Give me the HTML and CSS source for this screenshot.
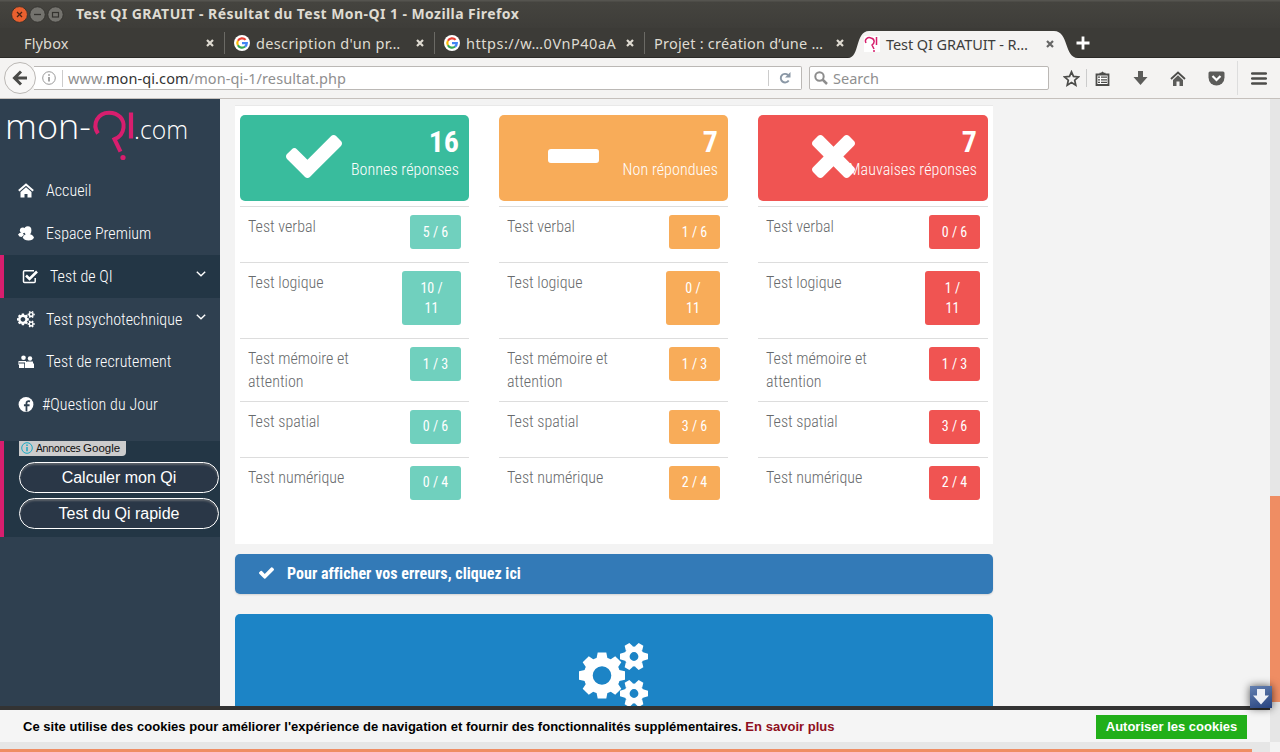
FILE: index.html
```html
<!DOCTYPE html>
<html lang="fr">
<head>
<meta charset="utf-8">
<title>Test QI GRATUIT - Résultat du Test Mon-QI 1</title>
<link rel="stylesheet" href="styles.css">
</head>
<body>
<svg class="defs" aria-hidden="true">
  <symbol id="check" viewBox="121 334 1550 1188"><path d="M1671 566q0 40-28 68l-724 724-136 136q-28 28-68 28t-68-28l-136-136-362-362q-28-28-28-68t28-68l136-136q28-28 68-28t68 28l294 295 656-657q28-28 68-28t68 28l136 136q28 28 28 68z"/></symbol>
  <symbol id="times" viewBox="302 366 1188 1188"><path d="M1490 1322q0 40-28 68l-136 136q-28 28-68 28t-68-28l-294-294-294 294q-28 28-68 28t-68-28l-136-136q-28-28-28-68t28-68l294-294-294-294q-28-28-28-68t28-68l136-136q28-28 68-28t68 28l294 294 294-294q28-28 68-28t68 28l136 136q28 28 28 68t-28 68l-294 294 294 294q28 28 28 68z"/></symbol>
  <symbol id="cogs" viewBox="0 0 70 66">
    <g fill="none" stroke="#fff">
      <g transform="translate(23 32.500)"><circle r="13.800" stroke-width="9"/><path id="bt" fill="#fff" stroke="none" d="M-4.300-23h8.600l1.400 7h-11.400zM-4.300 23h8.600l1.400-7h-11.400zM-23-4.300v8.600l7 1.400v-11.400zM23-4.300v8.600l-7 1.400v-11.400z"/><use href="#bt" transform="rotate(45)"/></g>
      <g id="sg" transform="translate(55 13.500)"><circle r="7.200" stroke-width="5.600"/><path id="st" fill="#fff" stroke="none" d="M-14-2.700v5.400l5 1.500v-8.400zM14-2.700v5.400l-5 1.500v-8.400z"/><use href="#st" transform="rotate(60)"/><use href="#st" transform="rotate(120)"/></g>
      <use href="#sg" y="37"/>
    </g>
  </symbol>
  <symbol id="google" viewBox="0 0 16 16"><circle cx="8" cy="8" r="8" fill="#fff"/><g fill="none" stroke-width="2.2"><path stroke="#ea4335" d="M11.6 4.900A4.700 4.700 0 0 0 3.900 5.800"/><path stroke="#fbbc05" d="M3.900 5.700a4.700 4.700 0 0 0 0 4.600"/><path stroke="#34a853" d="M3.900 10.200a4.700 4.700 0 0 0 7.200 1.300"/><path stroke="#4285f4" d="M8 8.100h4.800a4.700 4.700 0 0 1-1.700 3.500"/></g></symbol>
  <symbol id="close" viewBox="0 0 8 8"><path d="M1 1l6 6M7 1L1 7" stroke="currentColor" stroke-width="2.2"/></symbol>
  <symbol id="chev" viewBox="0 0 10 6"><path d="M.8.8L5 4.800 9.200.8" fill="none" stroke="#fff" stroke-width="1.400"/></symbol>
</svg>

<header class="titlebar">
  <svg width="54" height="18" viewBox="0 0 54 18">
    <circle cx="8.500" cy="8.500" r="7.900" fill="#e9602f" stroke="#2f2e2a" stroke-width=".8"/><path d="M6 6l5 5m0-5l-5 5" stroke="#4b2414" stroke-width="1.300"/>
    <circle cx="26.500" cy="8.500" r="7.700" fill="#74736e" stroke="#302f2b" stroke-width=".8"/><path d="M23 8.500h7" stroke="#34332f" stroke-width="1.300"/>
    <circle cx="44.500" cy="8.500" r="7.700" fill="#74736e" stroke="#302f2b" stroke-width=".8"/><rect x="41.500" y="6.500" width="6" height="4.500" fill="none" stroke="#34332f" stroke-width="1.200"/>
  </svg>
  <span class="wtitle">Test QI GRATUIT - Résultat du Test Mon-QI 1 - Mozilla Firefox</span>
</header>

<nav class="tabs">
  <div class="tab first"><span class="tt">Flybox</span><svg class="x"><use href="#close"/></svg></div>
  <div class="tab"><svg class="fav"><use href="#google"/></svg><span class="tt t2">description d'un pr…</span><svg class="x"><use href="#close"/></svg></div>
  <div class="tab"><svg class="fav"><use href="#google"/></svg><span class="tt t3">https://w…0VnP40aA</span><svg class="x"><use href="#close"/></svg></div>
  <div class="tab"><span class="tt t4">Projet : création d’une …</span><svg class="x"><use href="#close"/></svg></div>
  <div class="active">
    <svg class="shape" viewBox="0 0 230 28"><path fill="#f4f3f2" d="M0 28C12 28 7 1 21 1H206C221 1 216 28 230 28z"/></svg>
    <svg class="fav" viewBox="0 0 16 16"><path fill="#fff" d="M0 0h16v16H0z"/><path d="M2 7C0 3 4 .8 7 2c4 1 4 5 1 7l2 4M10 14v2M12.500 1v8" fill="none" stroke="#d6206d" stroke-width="1.500"/></svg>
    <span class="tt t5">Test QI GRATUIT - R…</span><svg class="x"><use href="#close"/></svg>
  </div>
  <svg class="plus" viewBox="0 0 14 14"><path d="M7 .5v13M.5 7h13" stroke="#fff" stroke-width="2.800"/></svg>
</nav>

<div class="toolbar">
  <div class="back"><svg width="16" height="16" viewBox="0 0 16 16"><path d="M9 1.500L2.500 8 9 14.500M3 8h12" fill="none" stroke="#4a4a48" stroke-width="3"/></svg></div>
  <div class="url">
    <svg width="14" height="14" viewBox="0 0 14 14"><circle cx="7" cy="7" r="6.300" fill="none" stroke="#999"/><path d="M7 6v4.500M7 3.200v1.600" stroke="#888" stroke-width="1.500"/></svg>
    <span class="addr">www.<b>mon-qi.com</b>/mon-qi-1/resultat.php</span>
    <span class="reload"><svg width="12" height="12" viewBox="0 0 12 12"><path d="M9.700 8.500A4.300 4.300 0 1 1 9 3" fill="none" stroke="#8a97a5" stroke-width="1.900"/><path d="M11.500 0v5.500H6z" fill="#8a97a5"/></svg></span>
  </div>
  <div class="search"><svg width="14" height="14" viewBox="0 0 14 14"><circle cx="5.500" cy="5.500" r="4.200" fill="none" stroke="#8d8d8d" stroke-width="2"/><path d="M8.500 8.500L13 13" stroke="#8d8d8d" stroke-width="2.500"/></svg><span>Search</span></div>
  <div class="tools">
    <svg class="star" width="17" height="17" viewBox="0 0 17 17"><path d="M8.500 1.800l2 4.600 5 .5-3.800 3.300 1.100 5-4.300-2.600-4.300 2.600 1.100-5L1.500 6.900l5-.5z" fill="none" stroke="#4c4c4a" stroke-width="1.700"/></svg>
    <i class="sep"></i>
    <svg class="list" width="15" height="15" viewBox="0 0 15 15"><path d="M1.500 3.500h12V14h-12z" fill="#fff" stroke="#4c4c4a" stroke-width="1.800"/><path d="M4.500 4V1.800h1.500L7.500.5 9 1.800h1.500V4z" fill="#4c4c4a"/><path d="M3 6.200h2M6 6.200h6M3 8.800h2M6 8.800h6M3 11.400h2M6 11.400h6" stroke="#4c4c4a" stroke-width="1.200"/></svg>
    <svg class="dl" width="15" height="14" viewBox="0 0 15 14"><path d="M5 0h5v6h4.500L7.500 14 .5 6H5z" fill="#5c5c5a"/></svg>
    <svg class="home" width="16" height="15" viewBox="0 0 16 15"><path d="M1 8l7-6.500L15 8" fill="none" stroke="#4c4c4a" stroke-width="1.800"/><path d="M3 9l5-4.700L13 9v6H9.500v-4.500h-3V15H3z" fill="#5c5c5a"/></svg>
    <svg class="pocket" width="17" height="15" viewBox="0 0 17 15"><path d="M2 .5h13q1.500 0 1.500 1.500v4.500a8 8 0 0 1-16 0V2Q.5.500 2 .5z" fill="#5c5c5a"/><path d="M4.500 5l4 4 4-4" fill="none" stroke="#fff" stroke-width="2.200"/></svg>
    <i class="sep tall"></i>
    <svg class="burger" width="16" height="13" viewBox="0 0 16 13"><path d="M1.200 1.500h13.600M1.200 6.500h13.600M1.200 11.500h13.600" stroke="#4c4c4a" stroke-width="2.500" stroke-linecap="round"/></svg>
  </div>
</div>

<div class="view">
  <aside class="side">
    <svg class="logo" width="220" height="70" viewBox="0 0 220 70">
      <g fill="#fff"><text x="5" y="39.500" class="lg1" textLength="86" lengthAdjust="spacingAndGlyphs">mon-</text><text x="134" y="39.500" class="lg2" textLength="54" lengthAdjust="spacingAndGlyphs">.com</text></g>
      <g fill="none" stroke="#d81e6e"><path stroke-width="4" d="M98 34.500C91.500 25 98 13.700 109 13.700c10 0 15.500 7 14.500 15-.7 5.500-4 9.500-9 11.500l6 12.500"/><path stroke-width="4.200" d="M131 13.500V39.500"/></g>
      <circle cx="123" cy="58.500" r="2.600" fill="#d81e6e"/>
    </svg>
    <ul class="menu">
      <li><svg class="mi" viewBox="0 0 16 15"><path d="M.8 7.800L8 1.500l7.200 6.300" fill="none" stroke="#fff" stroke-width="2"/><path fill="#fff" d="M2.500 9L8 4.300 13.500 9v5.500h-4V11h-3v3.500h-4z"/></svg><span>Accueil</span></li>
      <li><svg class="mi" viewBox="0 0 16 15"><g fill="#fff"><circle cx="4.800" cy="4.300" r="2.900"/><path d="M0 8.500Q1 6.500 4.500 6.500L6 9l-2.500 2Q1 11 0 8.500z"/><ellipse cx="9.800" cy="4.500" rx="3.600" ry="4.200"/><path d="M4.700 11.500Q6 8 10 7.500q5 1 6 4-1 3-5.500 3t-5.800-3z"/></g></svg><span>Espace Premium</span></li>
      <li class="on"><svg class="mi" viewBox="0 0 16 15"><path d="M12 1.800H2.500q-1 0-1 1v9.700q0 1 1 1h9.700q1 0 1-1V9" fill="none" stroke="#fff" stroke-width="1.500"/><path d="M4 6.500l3.500 3.500L15 2.500" fill="none" stroke="#fff" stroke-width="2.600"/></svg><span>Test de QI</span><svg class="chev"><use href="#chev"/></svg></li>
      <li class="psy"><svg class="mi cg"><use href="#cogs"/></svg><span>Test psychotechnique</span><svg class="chev"><use href="#chev"/></svg></li>
      <li><svg class="mi" viewBox="0 0 16 15"><g fill="#fff"><circle cx="5.500" cy="3.700" r="2.300"/><circle cx="12" cy="4.500" r="2.200"/><path d="M1 7h7v1.500H0V8zM9 7.500h6v2h1V14H7V8.500zM0 9.500h6.200V14H1V10.500H0z"/></g></svg><span>Test de recrutement</span></li>
      <li class="fb"><svg class="mi" viewBox="0 0 16 16"><circle cx="8" cy="8" r="7.900" fill="#fff"/><path d="M12.300 4.700c-2.800-.8-3.800.2-3.800 2V15.500M5.800 8.800h6" fill="none" stroke="#2f4050" stroke-width="1.900"/></svg><span>#Question du Jour</span></li>
    </ul>
    <div class="ads">
      <div class="adtag"><svg width="12" height="12" viewBox="0 0 12 12"><circle cx="6" cy="6" r="5.300" fill="none" stroke="#1aa9c4"/><path d="M6 5v4.300M6 2.500v1.500" stroke="#1aa9c4" stroke-width="1.500"/></svg><span class="an">Annonces</span><span class="go">Google</span></div>
      <a class="pill">Calculer mon Qi</a>
      <a class="pill">Test du Qi rapide</a>
    </div>
  </aside>

  <main class="main">
    <section class="card">
      <div class="col green">
        <div class="panel"><svg class="big ck"><use href="#check"/></svg><div class="num">16</div><div class="lab">Bonnes réponses</div></div>
        <div class="row"><span>Test verbal</span><b>5 / 6</b></div>
        <div class="row r2"><span>Test logique</span><b class="w10">10 /<br>11</b></div>
        <div class="row r3"><span>Test mémoire et<br>attention</span><b>1 / 3</b></div>
        <div class="row"><span>Test spatial</span><b class="up">0 / 6</b></div>
        <div class="row"><span>Test numérique</span><b class="up">0 / 4</b></div>
      </div>
      <div class="col orange">
        <div class="panel"><i class="minus"></i><div class="num">7</div><div class="lab">Non répondues</div></div>
        <div class="row"><span>Test verbal</span><b>1 / 6</b></div>
        <div class="row r2"><span>Test logique</span><b class="w0">0 /<br>11</b></div>
        <div class="row r3"><span>Test mémoire et<br>attention</span><b>1 / 3</b></div>
        <div class="row"><span>Test spatial</span><b class="up">3 / 6</b></div>
        <div class="row"><span>Test numérique</span><b class="up">2 / 4</b></div>
      </div>
      <div class="col red">
        <div class="panel"><svg class="big tm"><use href="#times"/></svg><div class="num">7</div><div class="lab">Mauvaises réponses</div></div>
        <div class="row"><span>Test verbal</span><b>0 / 6</b></div>
        <div class="row r2"><span>Test logique</span><b class="w1">1 /<br>11</b></div>
        <div class="row r3"><span>Test mémoire et<br>attention</span><b>1 / 3</b></div>
        <div class="row"><span>Test spatial</span><b class="up">3 / 6</b></div>
        <div class="row"><span>Test numérique</span><b class="up">2 / 4</b></div>
      </div>
    </section>
    <a class="errors"><svg width="15" height="12" fill="#fff"><use href="#check"/></svg><span>Pour afficher vos erreurs, cliquez ici</span></a>
    <section class="blue"><svg width="70" height="66"><use href="#cogs"/></svg></section>
  </main>

  <div class="cookie"><span class="msg">Ce site utilise des cookies pour améliorer l'expérience de navigation et fournir des fonctionnalités supplémentaires. <a>En savoir plus</a></span><a class="ok">Autoriser les cookies</a></div>
  <div class="vbar"><i></i></div>
  <div class="hbar"><i></i></div>
  <div class="down"><svg width="16" height="16" viewBox="0 0 16 16"><path fill="#eef0f6" d="M4 0h8v6.500h4L8 15.500 0 6.500h4z"/></svg></div>
</div>
</body>
</html>
```
FILE: styles.css
```css
* { box-sizing: border-box; }
body { margin: 0; width: 1280px; height: 752px; overflow: hidden; font-family: "Noto Sans", "Open Sans", sans-serif; background: #f3f3f3; display: flex; flex-direction: column; }
svg { display: block; flex: none; }
.defs { position: absolute; width: 0; height: 0; }

.titlebar { height: 28px; flex: none; background: linear-gradient(#55544f 0 1px, #45443f 2px, #3e3d39); display: flex; align-items: center; padding-left: 11px; }
.titlebar svg { margin-top: 2px; }
.wtitle { margin-left: 11px; font: bold 14px/20px "Noto Sans", sans-serif; letter-spacing: .43px; color: #dfdbd2; white-space: nowrap; }

.tabs { height: 30px; flex: none; background: #3c3b37; border-bottom: 1px solid #2b2a27; display: flex; align-items: center; color: #dfdbd2; }
.tab { width: 210px; height: 22px; padding: 0 10px 0 9px; display: flex; align-items: center; border-left: 1px solid #6b6a65; }
.tab.first { width: 224px; padding-left: 24px; border: 0; }
.fav { width: 16px; height: 16px; margin-right: 6px; position: relative; }
.tt { font-size: 14.500px; line-height: 20px; letter-spacing: .15px; white-space: nowrap; position: relative; }
.t2 { letter-spacing: .35px; }
.t3 { letter-spacing: .53px; }
.t4 { letter-spacing: .22px; }
.t5 { letter-spacing: -.07px; }
.x { width: 8px; height: 8px; margin-left: auto; position: relative; }
.active { width: 230px; height: 28px; margin: 0 0 -1px -6px; padding: 0 24px 0 16px; align-self: flex-end; display: flex; align-items: center; color: #3d3d3b; position: relative; }
.shape { position: absolute; left: 0; top: 0; width: 230px; height: 28px; }
.active .x { color: #666; }
.plus { width: 14px; height: 14px; margin-left: -2px; }

.toolbar { height: 41px; flex: none; background: #f4f3f2; border-bottom: 1px solid #c5c0bc; display: flex; align-items: center; padding-left: 4px; }
.back { width: 32px; height: 32px; border: 1px solid #bbb8b5; border-radius: 50%; background: #f8f7f6; display: grid; place-items: center; position: relative; z-index: 1; }
.url { width: 768px; height: 24px; margin-left: -2px; background: #fff; border: 1px solid #bbb8b5; border-left: 0; border-radius: 0 2px 2px 0; display: flex; align-items: center; padding-left: 8px; }
.addr { margin-left: 6px; padding-left: 5px; border-left: 1px solid #ccc; font-size: 14.500px; line-height: 17px; letter-spacing: .1px; color: #8f8f8f; white-space: nowrap; }
.addr b { font-weight: 400; color: #333; }
.reload { margin-left: auto; width: 33px; height: 16px; border-left: 1px solid #ccc; display: grid; place-items: center; }
.search { width: 240px; height: 24px; margin-left: 7px; background: #fff; border: 1px solid #bbb8b5; border-radius: 2px; display: flex; align-items: center; padding-left: 4px; gap: 5px; font-size: 14.500px; color: #8f8f8f; }
.tools { flex: 1; display: flex; align-items: center; }
.star { margin-left: 14px; }
.sep { width: 1px; height: 18px; background: #ccc; margin-left: 6px; }
.sep.tall { height: 34px; background: #ddd; margin-left: 12px; }
.list { margin-left: 8px; }
.dl { margin-left: 23px; }
.home { margin-left: 22px; }
.pocket { margin-left: 22px; }
.burger { margin-left: 13px; }

.view { flex: 1; position: relative; display: flex; overflow: hidden; }
.side { width: 220px; background: #2f4050; color: #fff; font-family: "Roboto Condensed", Roboto, sans-serif; font-stretch: 75%; font-weight: 300; }
.lg1, .lg2 { font-family: "Open Sans", sans-serif; font-weight: 300; font-stretch: 100%; font-size: 35px; }
.lg2 { font-size: 25px; }
.menu { list-style: none; margin: 0; padding: 0; font-size: 16px; letter-spacing: .04px; }
.menu li { height: 42.800px; display: flex; align-items: center; padding-left: 18px; position: relative; }
.menu span { margin-left: 12px; white-space: nowrap; }
.mi { width: 16px; height: 15px; }
.menu .on { height: 43.400px; background: #233645; border-left: 4px solid #d81e6e; }
.menu .psy { height: 42.200px; }
.cg { width: 18px; height: 17px; margin: 0 -1px; }
.menu .fb span { margin-left: 8px; letter-spacing: .1px; }
.chev { width: 10px; height: 6px; position: absolute; right: 14px; top: 16px; }
.ads { margin-top: 15px; height: 96px; background: #233645; border-left: 4px solid #d81e6e; padding-left: 15px; font-family: "Liberation Sans", Arial, sans-serif; font-weight: 400; }
.adtag { width: 107px; height: 15px; background: #ccc; border-bottom-right-radius: 4px; display: flex; align-items: center; padding-left: 2px; color: #111; white-space: nowrap; }
.an { font: 10px "DejaVu Sans", sans-serif; letter-spacing: -.6px; margin: 0 3px; }
.go { font-size: 11.500px; }
.pill { display: block; width: 200px; height: 31px; margin-top: 5px; border: 1px solid #fff; border-radius: 16px; background: #2a3747; text-align: center; font-size: 16px; line-height: 30px; box-shadow: inset 0 2px 2px #8888; }
.adtag + .pill { margin-top: 6px; }

.main { width: 788px; padding: 6px 15px 0; font-family: "Roboto Condensed", Roboto, sans-serif; font-stretch: 75%; }
.card { height: 439px; background: #fff; border-top: 1px solid #e9e9e9; padding: 9px 5px 0; display: grid; grid-template-columns: 229px 229px 230px; gap: 30px; }
.panel { height: 86px; border-radius: 5px; color: #fff; position: relative; text-align: right; padding: 10px 10px 0; margin-bottom: 5px; }
.green .panel { background: #39bc9d; }
.orange .panel { background: #f8ac59; }
.red .panel { background: #f05452; padding-right: 11px; }
.big { position: absolute; top: 20px; height: 43px; fill: #fff; }
.ck { left: 46px; width: 56px; }
.tm { left: 54px; width: 43px; }
.minus { position: absolute; left: 49px; top: 34px; width: 51px; height: 14px; background: #fff; border-radius: 3px; }
.num { font-size: 30px; line-height: 34px; font-weight: 700; }
.lab { font-size: 16px; line-height: 22px; font-weight: 300; letter-spacing: .08px; white-space: nowrap; }
.row { height: 56px; border-top: 1px solid #ddd; padding: 8px; display: flex; justify-content: space-between; align-items: flex-start; color: #676a6c; font-size: 16px; line-height: 23px; font-weight: 300; }
.r2 { height: 76px; }
.r3 { height: 63px; }
.row b { width: 51px; border-radius: 3px; padding: 7px 0; color: #fff; font-size: 14px; line-height: 20px; font-weight: 400; text-align: center; }
.row .up { padding: 6px 0 8px; }
.green b { background: #70d0be; }
.orange b { background: #f8ac59; }
.red b { background: #f05452; }
.row .w10 { width: 59px; }
.row .w0 { width: 54px; }
.row .w1 { width: 55px; }
.errors { display: flex; align-items: center; margin-top: 10px; height: 40px; background: #337ab7; border-radius: 5px; padding: 0 0 2px 24px; color: #fff; font-weight: 700; font-size: 16px; letter-spacing: .03px; gap: 13px; box-shadow: 0 1px 2px #0002; }
.blue { margin-top: 20px; height: 200px; background: #1c84c6; border-radius: 5px; padding-top: 29px; display: flex; justify-content: center; align-items: flex-start; }

.cookie { position: absolute; left: 0; top: 607px; width: 1270px; height: 36px; background: #f5f5f5; border-top: 4px solid #333; display: flex; align-items: center; justify-content: space-between; padding: 0 23px; font: bold 13px "Liberation Sans", Arial, sans-serif; color: #000; }
.msg { letter-spacing: .028px; }
.msg a { color: #8e0f1e; }
.ok { background: #21af19; color: #fff; width: 151px; height: 24px; line-height: 24px; text-align: center; margin-top: 2px; }
.vbar { position: absolute; right: 0; top: 0; width: 10px; height: 643px; background: #e6e6e6; }
.vbar i { position: absolute; top: 397px; width: 10px; height: 206px; background: #ef8d63; }
.hbar { position: absolute; left: 0; top: 643px; width: 1270px; height: 10px; background: #e6e6e6; }
.hbar i { position: absolute; left: 0; bottom: 0; width: 1252px; height: 3px; background: #ef8d63; }
.down { position: absolute; left: 1250px; top: 587px; width: 22px; height: 22px; background: linear-gradient(160deg, #6581b1, #26427f); box-shadow: 0 0 8px #000a; display: grid; place-items: center; }
```
